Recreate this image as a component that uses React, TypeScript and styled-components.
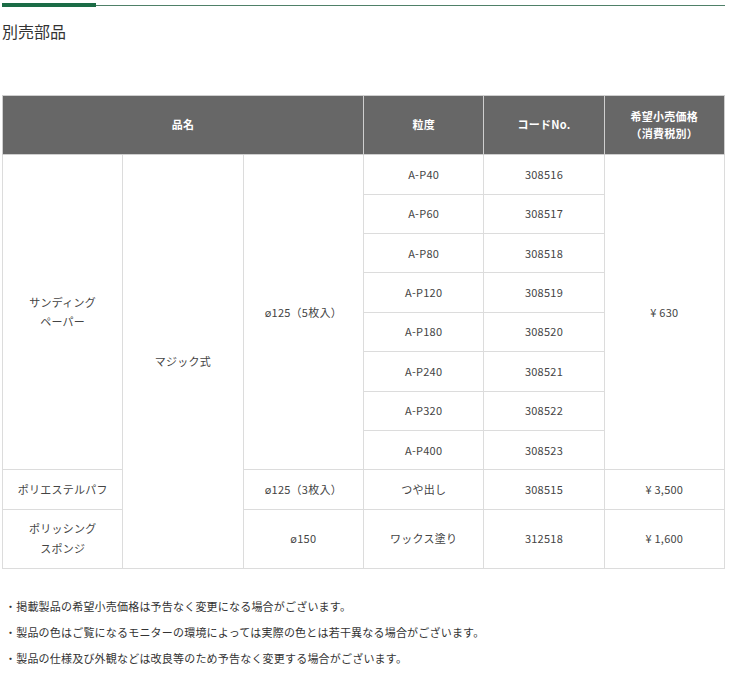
import React from "react";
import styled, { createGlobalStyle } from "styled-components";

const GlobalStyle = createGlobalStyle`
  html, body { margin: 0; padding: 0; background: #fff; }
  body {
    font-family: "Noto Sans CJK JP", "Noto Sans", sans-serif;
    color: #333;
  }
`;

const Page = styled.div`
  width: 730px;
  padding: 3px 5px 0 2px;
  box-sizing: border-box;
`;

const TopRule = styled.div`
  display: flex;
  align-items: center;
  height: 4px;
`;

const RuleThick = styled.div`
  width: 94px;
  height: 4px;
  background: #1b6c46;
`;

const RuleThin = styled.div`
  flex: 1;
  height: 1px;
  background: #4f8068;
`;

const Title = styled.h2`
  margin: 12px 0 0;
  font-size: 16px;
  line-height: 24px;
  font-weight: 400;
  color: #333;
`;

const Table = styled.table`
  margin-top: 52px;
  width: 723px;
  table-layout: fixed;
  border-collapse: collapse;
  font-size: 11px;
  letter-spacing: 0.25px;
`;

const Th = styled.th`
  background: #676767;
  color: #fff;
  font-weight: 700;
  font-size: 11px;
  line-height: 17.6px;
  padding: 11.5px 6px;
  border: 1px solid #cfcfcf;
  text-align: center;
  vertical-align: middle;
`;

const Td = styled.td`
  border: 1px solid #dcdcdc;
  color: #444;
  line-height: 19.4px;
  padding: 9.5px 6px;
  text-align: center;
  vertical-align: middle;
`;

const Notes = styled.ul`
  list-style: none;
  margin: 24px 0 0;
  padding: 0 0 0 3px;
  font-size: 11px;
  line-height: 26px;
  letter-spacing: 0.2px;
  color: #333;
`;

const Note = styled.li`
  margin: 0;
`;

const grits = [
  ["A-P40", "308516"],
  ["A-P60", "308517"],
  ["A-P80", "308518"],
  ["A-P120", "308519"],
  ["A-P180", "308520"],
  ["A-P240", "308521"],
  ["A-P320", "308522"],
  ["A-P400", "308523"],
];

export default function App() {
  return (
    <>
      <GlobalStyle />
      <Page>
        <TopRule>
          <RuleThick />
          <RuleThin />
        </TopRule>
        <Title>別売部品</Title>
        <Table>
          <thead>
            <tr>
              <Th colSpan={3}>品名</Th>
              <Th>粒度</Th>
              <Th>コードNo.</Th>
              <Th>
                希望小売価格
                <br />
                （消費税別）
              </Th>
            </tr>
          </thead>
          <tbody>
            {grits.map(([g, code], i) => (
              <tr key={g}>
                {i === 0 && (
                  <>
                    <Td rowSpan={8}>
                      サンディング
                      <br />
                      ペーパー
                    </Td>
                    <Td rowSpan={10}>マジック式</Td>
                    <Td rowSpan={8}>ø125（5枚入）</Td>
                  </>
                )}
                <Td>{g}</Td>
                <Td>{code}</Td>
                {i === 0 && <Td rowSpan={8}>¥ 630</Td>}
              </tr>
            ))}
            <tr>
              <Td>ポリエステルパフ</Td>
              <Td>ø125（3枚入）</Td>
              <Td>つや出し</Td>
              <Td>308515</Td>
              <Td>¥ 3,500</Td>
            </tr>
            <tr>
              <Td>
                ポリッシング
                <br />
                スポンジ
              </Td>
              <Td>ø150</Td>
              <Td>ワックス塗り</Td>
              <Td>312518</Td>
              <Td>¥ 1,600</Td>
            </tr>
          </tbody>
        </Table>
        <Notes>
          <Note>・掲載製品の希望小売価格は予告なく変更になる場合がございます。</Note>
          <Note>・製品の色はご覧になるモニターの環境によっては実際の色とは若干異なる場合がございます。</Note>
          <Note>・製品の仕様及び外観などは改良等のため予告なく変更する場合がございます。</Note>
        </Notes>
      </Page>
    </>
  );
}
